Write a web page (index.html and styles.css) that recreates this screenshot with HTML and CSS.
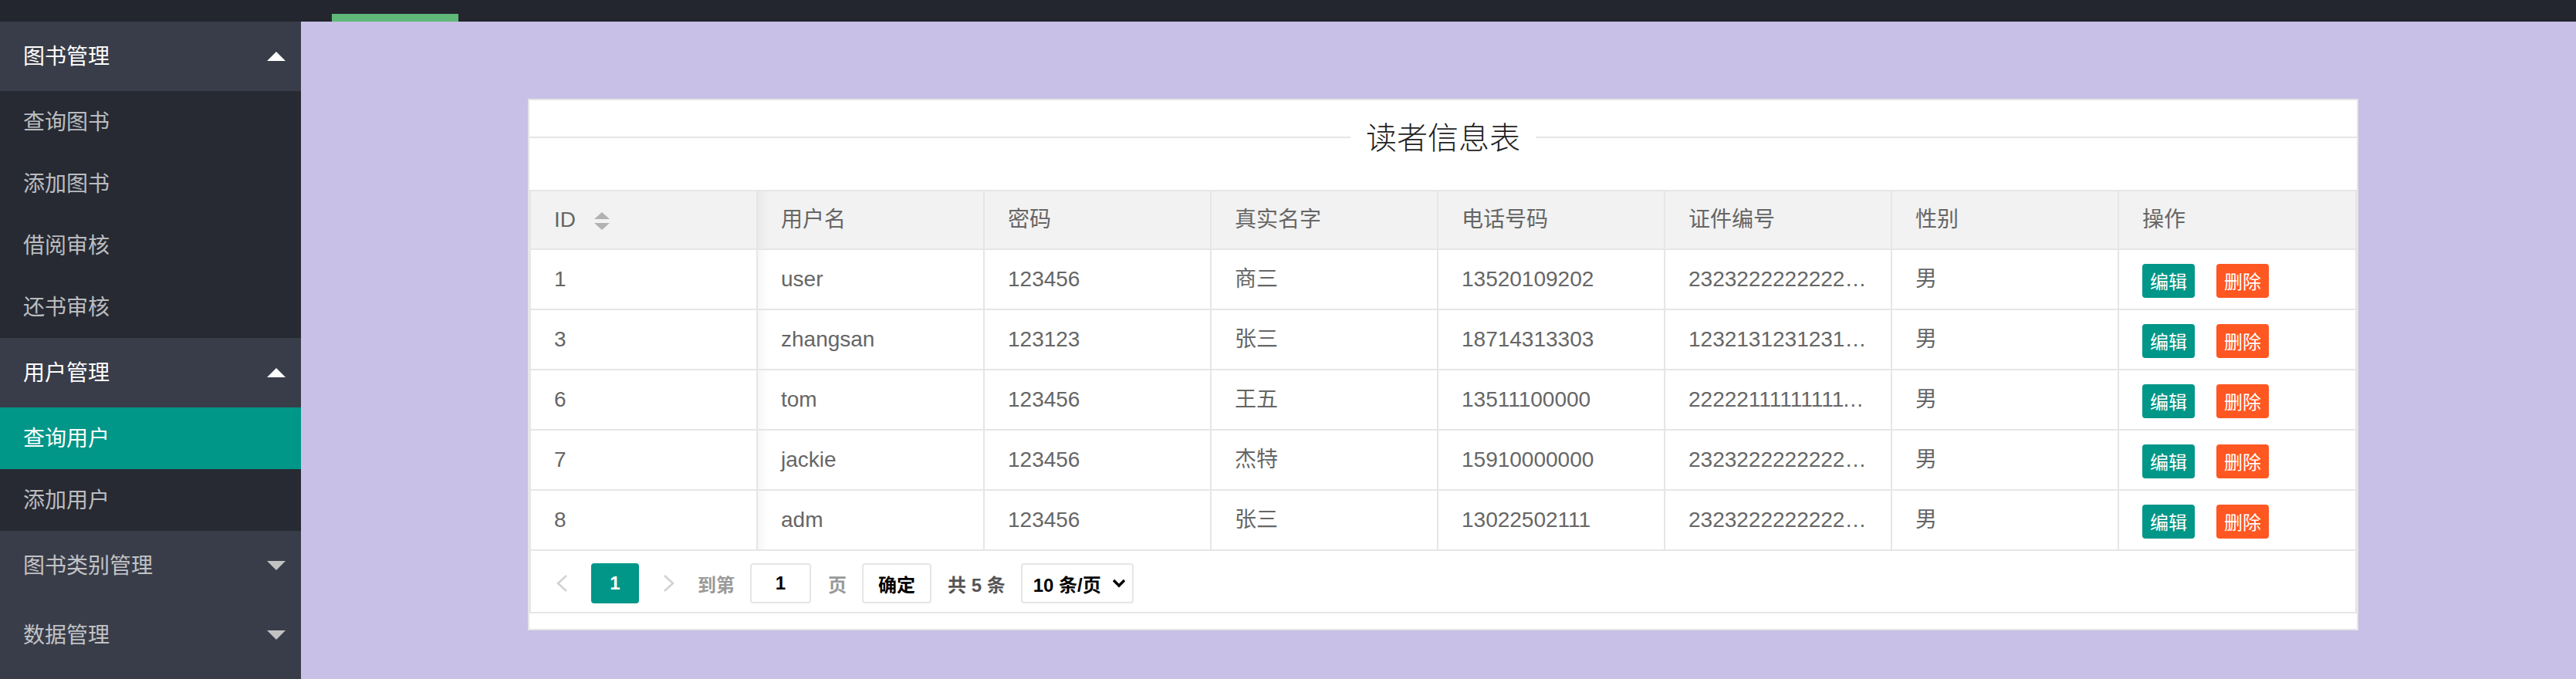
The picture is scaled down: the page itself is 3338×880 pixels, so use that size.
FILE: index.html
```html
<!DOCTYPE html>
<html lang="zh-CN">
<head>
<meta charset="utf-8">
<title>读者信息表</title>
<link rel="stylesheet" href="styles.css">
</head>
<body>
<div class="app">
  <header class="topbar"><span class="topbar-indicator"></span></header>
  <div class="main">
    <aside class="sidebar">
      <div class="nav-group open">
        <div class="nav-title"><span>图书管理</span><span class="caret caret-up"></span></div>
        <ul class="nav-child">
          <li>查询图书</li>
          <li>添加图书</li>
          <li>借阅审核</li>
          <li>还书审核</li>
        </ul>
      </div>
      <div class="nav-group open">
        <div class="nav-title"><span>用户管理</span><span class="caret caret-up"></span></div>
        <ul class="nav-child">
          <li class="active">查询用户</li>
          <li>添加用户</li>
        </ul>
      </div>
      <div class="nav-group">
        <div class="nav-title"><span>图书类别管理</span><span class="caret caret-down"></span></div>
      </div>
      <div class="nav-group">
        <div class="nav-title"><span>数据管理</span><span class="caret caret-down"></span></div>
      </div>
    </aside>
    <main class="content">
      <section class="card">
        <h2 class="card-title"><span>读者信息表</span></h2>
        <div class="table-view">
          <table class="data-table">
            <thead>
              <tr>
                <th class="col">ID <span class="sort"><i class="sort-up"></i><i class="sort-down"></i></span></th>
                <th class="col">用户名</th>
                <th class="col">密码</th>
                <th class="col">真实名字</th>
                <th class="col">电话号码</th>
                <th class="col">证件编号</th>
                <th class="col">性别</th>
                <th>操作</th>
              </tr>
            </thead>
            <tbody>
              <tr>
                <td>1</td><td>user</td><td>123456</td><td>商三</td><td>13520109202</td><td>232322222222222222</td><td>男</td>
                <td><span class="btn btn-edit">编辑</span><span class="btn btn-del">删除</span></td>
              </tr>
              <tr>
                <td>3</td><td>zhangsan</td><td>123123</td><td>张三</td><td>18714313303</td><td>123213123123123123</td><td>男</td>
                <td><span class="btn btn-edit">编辑</span><span class="btn btn-del">删除</span></td>
              </tr>
              <tr>
                <td>6</td><td>tom</td><td>123456</td><td>王五</td><td>13511100000</td><td>222221111111111111</td><td>男</td>
                <td><span class="btn btn-edit">编辑</span><span class="btn btn-del">删除</span></td>
              </tr>
              <tr>
                <td>7</td><td>jackie</td><td>123456</td><td>杰特</td><td>15910000000</td><td>232322222222222222</td><td>男</td>
                <td><span class="btn btn-edit">编辑</span><span class="btn btn-del">删除</span></td>
              </tr>
              <tr>
                <td>8</td><td>adm</td><td>123456</td><td>张三</td><td>13022502111</td><td>232322222222222222</td><td>男</td>
                <td><span class="btn btn-edit">编辑</span><span class="btn btn-del">删除</span></td>
              </tr>
            </tbody>
          </table>
          <div class="pager">
            <span class="pager-arrow"><svg width="17" height="24" viewBox="0 0 17 24"><polyline points="14,2 3,12 14,22" fill="none" stroke="#d2d2d2" stroke-width="2.6"/></svg></span>
            <span class="page-current">1</span>
            <span class="pager-arrow pager-next"><svg width="17" height="24" viewBox="0 0 17 24"><polyline points="3,2 14,12 3,22" fill="none" stroke="#d2d2d2" stroke-width="2.6"/></svg></span>
            <span class="skip-label">到第</span>
            <input class="skip-input" type="text" value="1">
            <span class="skip-unit">页</span>
            <button class="skip-btn" type="button">确定</button>
            <span class="count">共 5 条</span>
            <span class="limits"><span>10 条/页</span><svg width="18" height="12" viewBox="0 0 18 12"><polyline points="2,2 9,9 16,2" fill="none" stroke="#000" stroke-width="3.4"/></svg></span>
          </div>
        </div>
      </section>
    </main>
  </div>
</div>
</body>
</html>
```

FILE: styles.css
```css
html, body {
  margin: 0;
  padding: 0;
}

body {
  font-family: "Liberation Sans", "Noto Sans CJK SC", sans-serif;
}

.app {
  width: 3338px;
  height: 880px;
  display: flex;
  flex-direction: column;
  overflow: hidden;
}

.topbar {
  flex: none;
  height: 28px;
  background: #23262e;
  display: flex;
  align-items: flex-end;
  padding-left: 430px;
}

.topbar-indicator {
  width: 164px;
  height: 10px;
  background: #5fb878;
}

.main {
  flex: 1;
  display: flex;
  min-height: 0;
}

/* Sidebar */
.sidebar {
  flex: none;
  width: 390px;
  background: #393d49;
  font-family: "Noto Sans CJK SC", sans-serif;
  font-size: 28px;
}

.nav-title {
  height: 90px;
  box-sizing: border-box;
  display: flex;
  align-items: center;
  justify-content: space-between;
  padding: 0 20px 4px 30px;
  color: rgba(255, 255, 255, 0.7);
}

.nav-title .caret {
  margin-top: 4px;
}

.nav-group.open .nav-title {
  color: #fff;
}

.caret {
  width: 0;
  height: 0;
  border-left: 12px solid transparent;
  border-right: 12px solid transparent;
}

.caret-up {
  border-bottom: 12px solid #fff;
}

.caret-down {
  border-top: 12px solid #c2c2c2;
}

.nav-child {
  list-style: none;
  margin: 0;
  padding: 0;
  background: #272a33;
}

.nav-child li {
  height: 80px;
  box-sizing: border-box;
  display: flex;
  align-items: center;
  padding: 0 0 4px 30px;
  color: rgba(255, 255, 255, 0.7);
}

.nav-child li.active {
  background: #009688;
  color: #fff;
}

/* Content */
.content {
  flex: 1;
  background: #c8c0e6;
  padding: 100px 282px 0 294px;
}

.card {
  background: #fff;
  border: 2px solid #e6e6e6;
  padding-bottom: 20px;
}

.card-title {
  margin: 26px 0 50px;
  height: 40px;
  display: flex;
  align-items: center;
  font-family: "Noto Sans CJK SC", sans-serif;
  font-size: 40px;
  line-height: 40px;
  font-weight: 300;
  color: #222;
}

.card-title::before,
.card-title::after {
  content: "";
  flex: 1;
  height: 2px;
  margin-top: 4px;
  background: #e6e6e6;
}

.card-title span {
  padding: 0 20px;
}

.table-view {
  border: 2px solid #e6e6e6;
}

.data-table {
  width: 100%;
  border-collapse: separate;
  border-spacing: 0;
  table-layout: fixed;
  font-size: 28px;
  color: #666;
}

.data-table th,
.data-table td {
  box-sizing: border-box;
  padding: 0 30px;
  text-align: left;
  font-weight: normal;
  white-space: nowrap;
  overflow: hidden;
  text-overflow: ellipsis;
  border-right: 2px solid #e6e6e6;
  border-bottom: 2px solid #e6e6e6;
}

.data-table th:last-child,
.data-table td:last-child {
  border-right: 0;
}

.data-table th.col {
  width: 294px;
}

.data-table th {
  background-color: #f2f2f2;
  line-height: 74px;
}

.data-table td {
  line-height: 76px;
}

.data-table th:nth-child(2),
.data-table td:nth-child(2) {
  background-image: linear-gradient(to right, rgba(0, 0, 0, 0.035), rgba(0, 0, 0, 0) 14px);
}

.sort {
  display: inline-flex;
  flex-direction: column;
  gap: 5px;
  margin-left: 16px;
  vertical-align: middle;
}

.sort i {
  display: block;
  width: 0;
  height: 0;
  border-left: 10px solid transparent;
  border-right: 10px solid transparent;
}

.sort .sort-up {
  border-bottom: 9px solid #b2b2b2;
}

.sort .sort-down {
  border-top: 9px solid #b2b2b2;
}

.btn {
  display: inline-block;
  height: 44px;
  line-height: 44px;
  padding: 0 10px;
  border-radius: 4px;
  font-family: "Noto Sans CJK SC", sans-serif;
  font-size: 24px;
  color: #fff;
  vertical-align: middle;
}

.btn-edit {
  background: #009688;
}

.btn-del {
  background: #ff5722;
  margin-left: 28px;
}

/* Pager */
.pager {
  display: flex;
  align-items: center;
  height: 79px;
  box-sizing: border-box;
  padding: 5px 0 0 32px;
  font-family: "Liberation Sans", "Noto Sans CJK SC", sans-serif;
  font-size: 24px;
  font-weight: bold;
}

.pager-arrow {
  display: flex;
  width: 17px;
}

.page-current {
  margin-left: 29px;
  width: 62px;
  height: 52px;
  border-radius: 4px;
  background: #009688;
  color: #fff;
  display: flex;
  align-items: center;
  justify-content: center;
}

.pager-next {
  margin-left: 30px;
}

.skip-label {
  margin-left: 29px;
  color: #999;
}

.skip-input {
  margin-left: 20px;
  width: 79px;
  height: 52px;
  box-sizing: border-box;
  border: 2px solid #e6e6e6;
  border-radius: 4px;
  padding: 0;
  text-align: center;
  font: bold 24px "Liberation Sans", sans-serif;
  color: #000;
}

.skip-unit {
  margin-left: 22px;
  color: #999;
}

.skip-btn {
  margin-left: 20px;
  width: 90px;
  height: 52px;
  box-sizing: border-box;
  border: 2px solid #e6e6e6;
  border-radius: 4px;
  background: #fff;
  padding: 0;
  font: bold 24px "Noto Sans CJK SC", sans-serif;
  color: #000;
}

.count {
  margin-left: 21px;
  color: #555;
}

.limits {
  margin-left: 20px;
  width: 146px;
  height: 52px;
  box-sizing: border-box;
  border: 2px solid #e6e6e6;
  border-radius: 4px;
  display: flex;
  align-items: center;
  justify-content: space-between;
  padding: 0 8px 0 14px;
  color: #000;
}
```
